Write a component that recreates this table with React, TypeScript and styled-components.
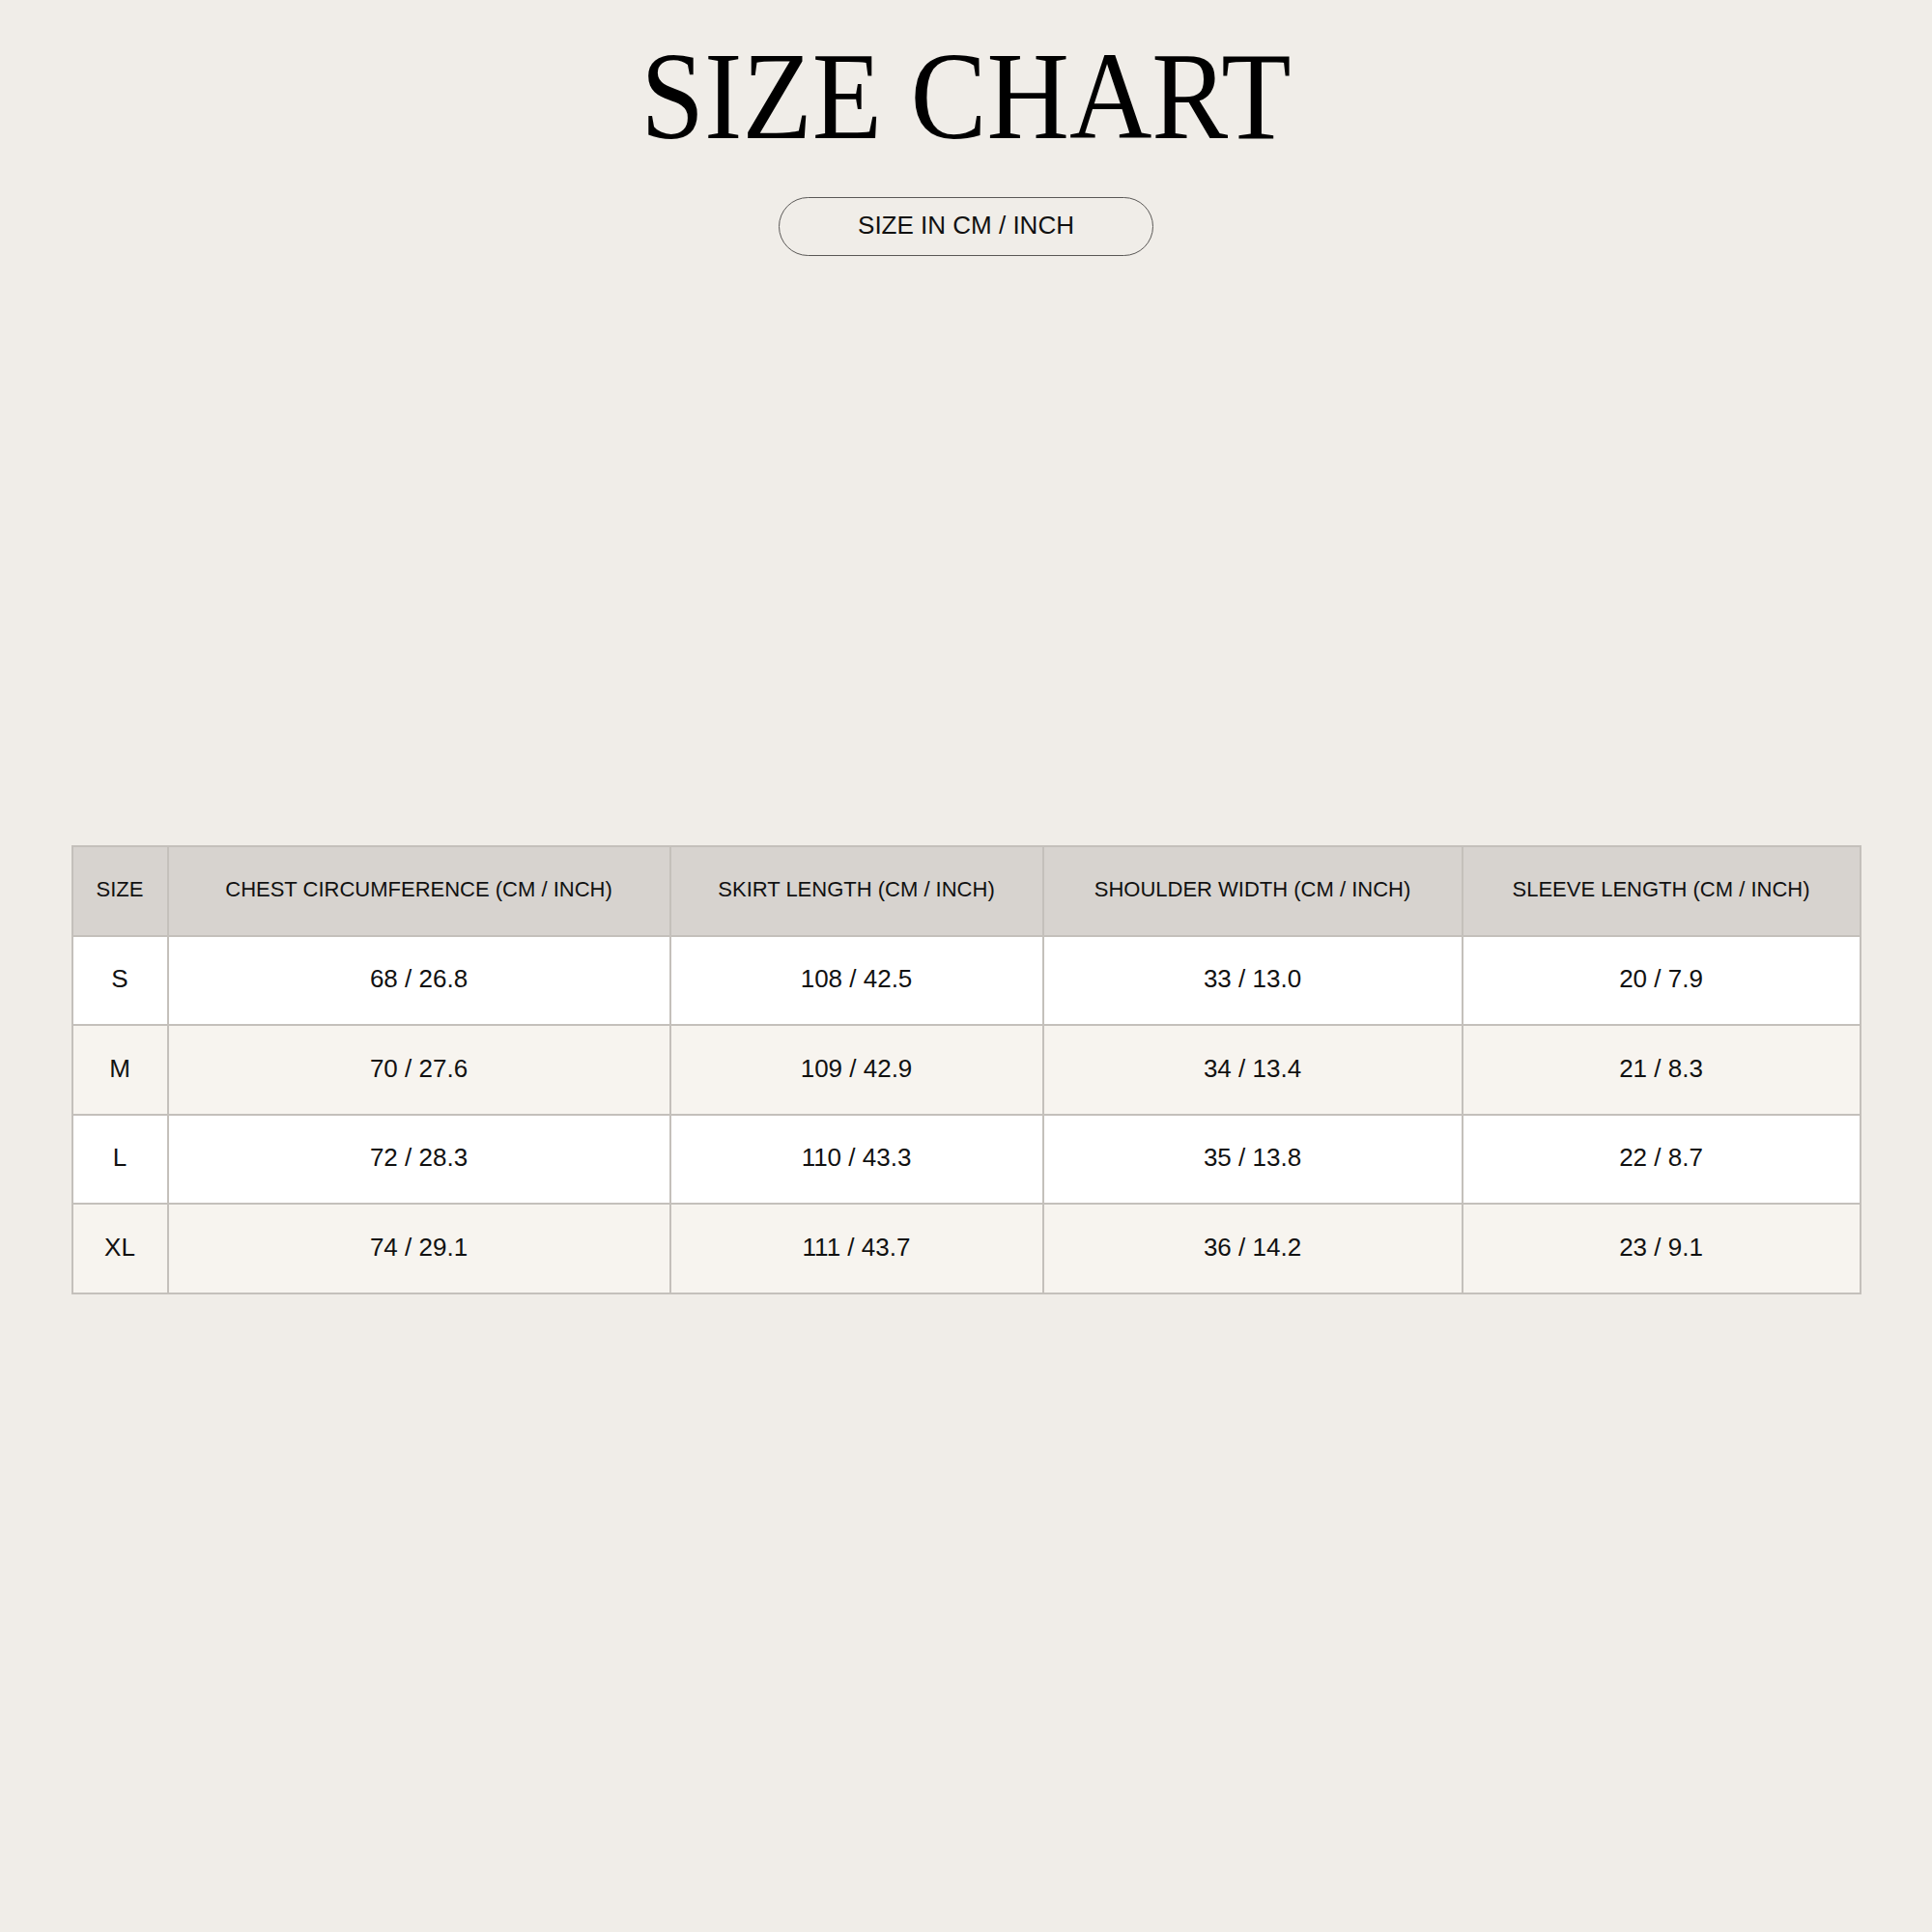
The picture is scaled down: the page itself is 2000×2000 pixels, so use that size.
import styled, { createGlobalStyle } from "styled-components";

const GlobalStyle = createGlobalStyle`
  html, body {
    margin: 0;
    padding: 0;
    background: #f0ede8;
  }
  body {
    font-family: "Liberation Sans", Arial, sans-serif;
    color: #111;
  }
`;

type Row = {
  size: string;
  chest: string;
  skirt: string;
  shoulder: string;
  sleeve: string;
};

const ROWS: Row[] = [
  { size: "S", chest: "68 / 26.8", skirt: "108 / 42.5", shoulder: "33 / 13.0", sleeve: "20 / 7.9" },
  { size: "M", chest: "70 / 27.6", skirt: "109 / 42.9", shoulder: "34 / 13.4", sleeve: "21 / 8.3" },
  { size: "L", chest: "72 / 28.3", skirt: "110 / 43.3", shoulder: "35 / 13.8", sleeve: "22 / 8.7" },
  { size: "XL", chest: "74 / 29.1", skirt: "111 / 43.7", shoulder: "36 / 14.2", sleeve: "23 / 9.1" },
];

const HEADERS = [
  "SIZE",
  "CHEST CIRCUMFERENCE (CM / INCH)",
  "SKIRT LENGTH (CM / INCH)",
  "SHOULDER WIDTH (CM / INCH)",
  "SLEEVE LENGTH (CM / INCH)",
];

const COL_WIDTHS = [99, 520, 386, 434, 412];

const Page = styled.div`
  width: 2000px;
  min-height: 2000px;
  padding-top: 34px;
  box-sizing: border-box;
  display: flex;
  flex-direction: column;
  align-items: center;
`;

const Title = styled.h1`
  margin: 0;
  font-family: "Liberation Serif", "Times New Roman", serif;
  font-weight: 400;
  font-size: 130px;
  line-height: 130px;
  color: #000;
  transform: scaleX(0.91);
  white-space: nowrap;
`;

const UnitPill = styled.div`
  margin-top: 40px;
  width: 388px;
  height: 61px;
  box-sizing: border-box;
  padding-bottom: 3px;
  border: 1px solid #5a5856;
  border-radius: 31px;
  display: flex;
  align-items: center;
  justify-content: center;
  font-size: 26px;
`;

const Table = styled.table`
  margin-top: 610px;
  width: 1852px;
  table-layout: fixed;
  border-collapse: collapse;
  border: 2px solid #c4c0bb;
`;

const HeadCell = styled.th`
  height: 88.5px;
  padding: 0 0 2px;
  background: #d7d3cf;
  border: 2px solid #c4c0bb;
  font-weight: 400;
  font-size: 22px;
  text-align: center;
  vertical-align: middle;
`;

const BodyRow = styled.tr<{ $alt: boolean }>`
  background: ${(p) => (p.$alt ? "#f7f4ef" : "#ffffff")};
`;

const Cell = styled.td`
  height: 88.5px;
  padding: 0 0 2px;
  border: 2px solid #c4c0bb;
  font-size: 26px;
  text-align: center;
  vertical-align: middle;
`;

export default function App() {
  return (
    <>
      <GlobalStyle />
      <Page>
        <Title>SIZE CHART</Title>
        <UnitPill>SIZE IN CM / INCH</UnitPill>
        <Table>
          <colgroup>
            {COL_WIDTHS.map((w, i) => (
              <col key={i} style={{ width: w }} />
            ))}
          </colgroup>
          <thead>
            <tr>
              {HEADERS.map((h) => (
                <HeadCell key={h}>{h}</HeadCell>
              ))}
            </tr>
          </thead>
          <tbody>
            {ROWS.map((r, i) => (
              <BodyRow key={r.size} $alt={i % 2 === 1}>
                <Cell>{r.size}</Cell>
                <Cell>{r.chest}</Cell>
                <Cell>{r.skirt}</Cell>
                <Cell>{r.shoulder}</Cell>
                <Cell>{r.sleeve}</Cell>
              </BodyRow>
            ))}
          </tbody>
        </Table>
      </Page>
    </>
  );
}
